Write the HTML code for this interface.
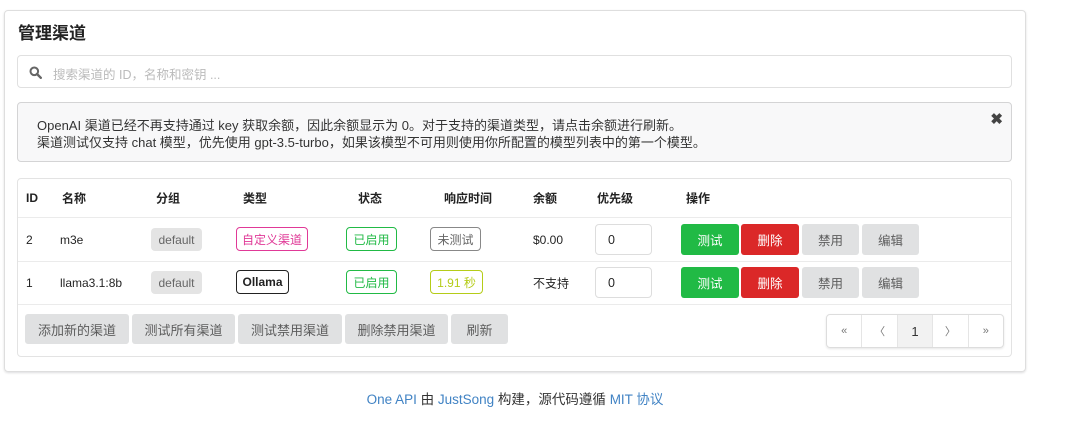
<!DOCTYPE html>
<html><head><meta charset="utf-8"><style>
*{box-sizing:border-box;margin:0;padding:0}
body{width:1080px;height:433px;background:#fff;font-family:"Liberation Sans","Noto Sans CJK SC",sans-serif;color:rgba(0,0,0,.87);font-size:12px;position:relative;overflow:hidden}
.a{position:absolute}
.card{left:4px;top:10px;width:1022px;height:362px;border:1px solid #dedede;border-radius:4px;box-shadow:0 1px 2px rgba(34,36,38,.15)}
.title{left:18px;top:19px;font-size:17px;font-weight:bold;color:#222}
.search{left:17px;top:55px;width:995px;height:33px;border:1px solid #e0e0e0;border-radius:4px}
.msg{left:17px;top:102px;width:995px;height:60px;background:#f8f8f9;border:1px solid #d4d4d5;border-radius:4px;font-size:13px;line-height:17px;padding:14px 0 0 19px;color:#333}
.tbl{left:17px;top:178px;width:995px;height:179px;border:1px solid #e3e3e3;border-radius:4px}
.hl{left:18px;width:993px;height:1px;background:#ebebeb}
.t{position:absolute;transform:translateY(-50%);white-space:nowrap}
.h{font-weight:bold;color:#222}
.b{position:absolute;display:flex;align-items:center;justify-content:center;border-radius:4px;font-size:12px;white-space:nowrap}
.g{background:#e4e4e4;color:#666}
.btn{position:absolute;display:flex;align-items:center;justify-content:center;border-radius:3px;font-size:12.5px;color:#fff}
.bg{background:#e0e1e2;color:rgba(0,0,0,.6)}
.inp{position:absolute;border:1px solid #ddd;border-radius:4px;padding-left:12px;display:flex;align-items:center;font-size:12.5px}
.pg{left:826px;top:314px;width:178px;height:34px;border:1px solid #ddd;border-radius:4px;display:flex;box-shadow:0 1px 2px rgba(0,0,0,.1)}
.pg div{flex:1;display:flex;align-items:center;justify-content:center;border-right:1px solid #e5e5e5;font-size:11px;color:#777}
.pg div:last-child{border-right:0}
.ft{left:0;width:1030px;top:388px;text-align:center;font-size:13.5px;color:#333}
.ft span{color:#4183c4}
</style></head><body>
<div class="a card"></div>
<div class="a title">管理渠道</div>
<div class="a search"><svg class="a" style="left:11px;top:10px" width="13" height="13" viewBox="0 0 13 13"><circle cx="5.3" cy="5.3" r="3.8" fill="none" stroke="#666" stroke-width="2"/><path d="M8 8l3.8 3.8" stroke="#666" stroke-width="2.4" stroke-linecap="round"/></svg><span class="a" style="left:35px;top:8px;font-size:12.5px;color:#bbb">搜索渠道的 ID，名称和密钥 ...</span></div>
<div class="a msg">OpenAI 渠道已经不再支持通过 key 获取余额，因此余额显示为 0。对于支持的渠道类型，请点击余额进行刷新。<br>渠道测试仅支持 chat 模型，优先使用 gpt-3.5-turbo，如果该模型不可用则使用你所配置的模型列表中的第一个模型。<span class="a" style="right:8px;top:8px;font-size:15px;font-weight:bold;color:#444">✖</span></div>
<div class="a tbl"></div>
<div class="a hl" style="top:217px"></div>
<div class="a hl" style="top:261px"></div>
<div class="a hl" style="top:304px"></div>
<div class="t h" style="left:26px;top:198px">ID</div>
<div class="t h" style="left:62px;top:198px">名称</div>
<div class="t h" style="left:156px;top:198px">分组</div>
<div class="t h" style="left:243px;top:198px">类型</div>
<div class="t h" style="left:358px;top:198px">状态</div>
<div class="t h" style="left:444px;top:198px">响应时间</div>
<div class="t h" style="left:533px;top:198px">余额</div>
<div class="t h" style="left:597px;top:198px">优先级</div>
<div class="t h" style="left:686px;top:198px">操作</div>

<div class="t" style="left:26px;top:240px">2</div>
<div class="t" style="left:60px;top:240px">m3e</div>
<div class="b g" style="left:151px;top:228px;width:51px;height:23px">default</div>
<div class="b" style="left:236px;top:227px;width:72px;height:24px;border:1px solid #e03997;color:#e03997;background:#fff">自定义渠道</div>
<div class="b" style="left:346px;top:227px;width:51px;height:24px;border:1px solid #21ba45;color:#21ba45">已启用</div>
<div class="b" style="left:430px;top:227px;width:51px;height:24px;border:1px solid #888;color:#666">未测试</div>
<div class="t" style="left:533px;top:240px">$0.00</div>
<div class="inp" style="left:595px;top:224px;width:57px;height:31px">0</div>

<div class="t" style="left:26px;top:283px">1</div>
<div class="t" style="left:60px;top:283px">llama3.1:8b</div>
<div class="b g" style="left:151px;top:271px;width:51px;height:23px">default</div>
<div class="b" style="left:236px;top:270px;width:53px;height:24px;border:1px solid #222;color:#222;font-weight:bold">Ollama</div>
<div class="b" style="left:346px;top:270px;width:51px;height:24px;border:1px solid #21ba45;color:#21ba45">已启用</div>
<div class="b" style="left:430px;top:270px;width:53px;height:24px;border:1px solid #b5cc18;color:#b5cc18">1.91 秒</div>
<div class="t" style="left:533px;top:283px">不支持</div>
<div class="inp" style="left:595px;top:267px;width:57px;height:31px">0</div>

<div class="btn" style="left:681px;top:224px;width:58px;height:31px;background:#21ba45">测试</div>
<div class="btn" style="left:741px;top:224px;width:58px;height:31px;background:#db2828">删除</div>
<div class="btn bg" style="left:802px;top:224px;width:57px;height:31px">禁用</div>
<div class="btn bg" style="left:862px;top:224px;width:57px;height:31px">编辑</div>
<div class="btn" style="left:681px;top:267px;width:58px;height:31px;background:#21ba45">测试</div>
<div class="btn" style="left:741px;top:267px;width:58px;height:31px;background:#db2828">删除</div>
<div class="btn bg" style="left:802px;top:267px;width:57px;height:31px">禁用</div>
<div class="btn bg" style="left:862px;top:267px;width:57px;height:31px">编辑</div>

<div class="btn bg" style="left:25px;top:314px;width:104px;height:30px;font-size:13px">添加新的渠道</div>
<div class="btn bg" style="left:132px;top:314px;width:103px;height:30px;font-size:13px">测试所有渠道</div>
<div class="btn bg" style="left:238px;top:314px;width:104px;height:30px;font-size:13px">测试禁用渠道</div>
<div class="btn bg" style="left:345px;top:314px;width:103px;height:30px;font-size:13px">删除禁用渠道</div>
<div class="btn bg" style="left:451px;top:314px;width:57px;height:30px;font-size:13px">刷新</div>

<div class="a pg"><div>«</div><div>〈</div><div style="background:#f2f2f2;color:#333;font-size:13px">1</div><div>〉</div><div>»</div></div>

<div class="a ft"><span>One API</span> 由 <span>JustSong</span> 构建，源代码遵循 <span>MIT 协议</span></div>
</body></html>
